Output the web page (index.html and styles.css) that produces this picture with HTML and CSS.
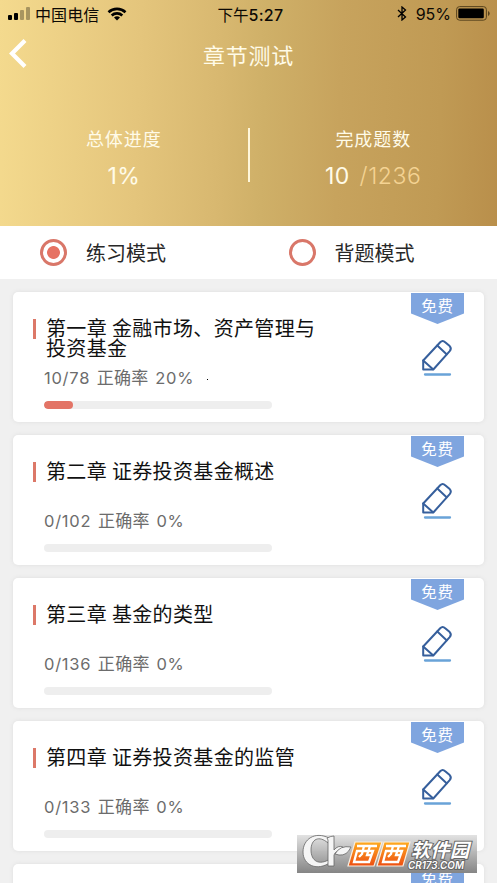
FILE: index.html
```html
<!DOCTYPE html>
<html lang="zh-CN">
<head>
<meta charset="utf-8">
<title>章节测试</title>
<link rel="stylesheet" href="styles.css">
</head>
<body>
<svg class="defs" width="0" height="0" aria-hidden="true">
  <symbol id="pencil" viewBox="0 0 34 38">
    <g fill="none" stroke="#365f9c" stroke-width="2" stroke-linejoin="round" stroke-linecap="round">
      <path d="M3.200 22.500 20.200 4.200q2.400-2.500 5 0l4.500 3.900q2.200 2.400 0 5L13.300 31.500H3.200z"/>
      <path d="m17.300 7.500 9.300 8.700M3.200 22.500l9.800 8.700"/>
    </g>
    <path d="M5 36.500h25" stroke="#69a3d8" stroke-width="2.300" stroke-linecap="round"/>
  </symbol>
</svg>
<div class="screen">
  <header class="hero">
    <div class="status">
      <div class="carrier">
        <svg width="23" height="14" viewBox="0 0 23 14"><rect x="0" y="8" width="4" height="5" rx="1"/><rect x="6" y="6" width="4" height="7" rx="1"/><g opacity=".3"><rect x="12" y="3" width="4" height="10" rx="1"/><rect x="18" y="0" width="4" height="13" rx="1"/></g></svg>
        <span class="operator">中国电信</span>
        <svg class="wifi" width="20" height="14" viewBox="0 0 20 14"><path d="M1.500 5.200a12.400 12.400 0 0 1 17 0M4.700 8.500a7.700 7.700 0 0 1 10.600 0" fill="none" stroke="#000" stroke-width="2.600"/><path d="m10 13.500 3-3.100q-3-2.200-6 0z"/></svg>
      </div>
      <div class="clock">下午<span>5:27</span></div>
      <div class="power">
        <svg width="10" height="15" viewBox="0 0 10 15"><path d="m1 4 7.500 7L5 14V1l3.500 3L1 11" fill="none" stroke="#000" stroke-width="1.300"/></svg>
        <span>95%</span>
        <svg class="battery" width="34" height="15" viewBox="0 0 34 15"><rect x=".6" y=".6" width="29.800" height="13.600" rx="3" fill="none" stroke="#58431d" stroke-width="1"/><rect x="2.300" y="2.500" width="25.500" height="9.800" rx="1.200"/><path d="M32 5v5q1.700-.6 1.700-2.500T32 5" fill="#58431d"/></svg>
      </div>
    </div>
    <div class="nav">
      <svg class="back" width="18" height="30" viewBox="0 0 18 30"><path d="M16 1.500 3 14.500 16 27.500" fill="none" stroke="#fff" stroke-width="4.200"/></svg>
      <h1>章节测试</h1>
    </div>
    <div class="stats">
      <div class="stat"><div class="label">总体进度</div><div class="value">1%</div></div>
      <div class="divider"></div>
      <div class="stat"><div class="label">完成题数</div><div class="value">10 <span>/1236</span></div></div>
    </div>
  </header>
  <nav class="modes">
    <div class="mode"><i class="radio on"></i>练习模式</div>
    <div class="mode"><i class="radio"></i>背题模式</div>
  </nav>
  <main class="list">
    <article class="card">
      <h2>第一章 金融市场、资产管理与<br>投资基金</h2>
      <p><b>10/78</b> 正确率 <b>20%</b></p>
      <div class="track"><div class="fill" style="width:12.8%"></div></div>
      <div class="badge">免费</div><svg class="edit"><use href="#pencil"/></svg>
      <i class="dot"></i>
    </article>
    <article class="card">
      <h2>第二章 证券投资基金概述</h2>
      <p><b>0/102</b> 正确率 <b>0%</b></p>
      <div class="track"></div>
      <div class="badge">免费</div><svg class="edit"><use href="#pencil"/></svg>
    </article>
    <article class="card">
      <h2>第三章 基金的类型</h2>
      <p><b>0/136</b> 正确率 <b>0%</b></p>
      <div class="track"></div>
      <div class="badge">免费</div><svg class="edit"><use href="#pencil"/></svg>
    </article>
    <article class="card">
      <h2>第四章 证券投资基金的监管</h2>
      <p><b>0/133</b> 正确率 <b>0%</b></p>
      <div class="track"></div>
      <div class="badge">免费</div><svg class="edit"><use href="#pencil"/></svg>
    </article>
    <article class="card"><div class="badge">免费</div></article>
  </main>
  <div class="watermark">
    <svg width="180" height="38" viewBox="0 0 180 38">
      <defs><linearGradient id="orange" x2="0" y2="1"><stop stop-color="#ffac20"/><stop offset="1" stop-color="#ed4e12"/></linearGradient></defs>
      <g stroke="#666" stroke-width=".8" fill="#f5f5f5">
        <path d="M32 3C18-4 6 4 6 17s14 20 28 10l-1-3C22 31 14 26 14 15S22 0 31 8z"/>
        <path d="M30 3q4-2 7-2v14q4-5 9-3l-2 4q-5-1-7 4v11h-6V5z"/>
        <path d="M38 19q5-9 16-7-4 9-12 8z"/>
      </g>
      <g stroke="#f8eee0" stroke-width="1.200" fill="url(#orange)"><path d="M58 7h27l-8 24H51zM87 7h26l-7 24H80z"/></g>
      <g fill="none" stroke="#fff" stroke-width="2.300">
        <path id="xi" d="M60 11h20M60 16h16l-4 11H57zM67 11l-2 8-3 3M73 11l-3 9h4"/>
        <use href="#xi" x="29"/>
      </g>
      <text class="brand" x="114" y="22" textLength="58">软件园</text>
      <text class="domain" x="111" y="34" textLength="56" lengthAdjust="spacingAndGlyphs">CR173.COM</text>
    </svg>
  </div>
</div>
</body>
</html>
```
FILE: styles.css
```css
* { box-sizing: border-box; }
body { margin: 0; }
.defs { position: absolute; }
.screen {
  position: relative;
  width: 497px;
  height: 883px;
  overflow: hidden;
  background: #f0f0f0;
  font-family: "Noto Sans CJK SC", sans-serif;
  font-weight: 400;
}
.hero {
  height: 226px;
  background: linear-gradient(92deg, #f4da8e 0%, #e4c57c 28%, #d8b870 44%, #cfb068 53%, #c7a35d 68%, #c09a54 88%, #b98f4b 100%);
  color: #fffbe8;
}
.status {
  display: grid;
  grid-template-columns: 1fr auto 1fr;
  align-items: center;
  height: 27px;
  padding: 0 7px 0 8px;
  color: #0c0904;
}
.carrier, .power { display: flex; align-items: center; }
.operator { margin-left: 4px; font-size: 16px; letter-spacing: .1px; line-height: 24px; }
.wifi { margin-left: 8px; }
.clock { padding-left: 3px; font-size: 15.500px; line-height: 24px; }
.clock span { font: 500 16px Inter, sans-serif; letter-spacing: .3px; }
.power { justify-content: flex-end; font: 400 16px Inter, sans-serif; }
.power span { margin-left: 9px; }
.battery { margin-left: 5px; }
.nav {
  display: grid;
  grid-template-columns: 60px 1fr 60px;
  align-items: center;
  height: 54px;
}
.back { margin-left: 9px; }
h1 { margin: 0; font-size: 22px; font-weight: 400; letter-spacing: .8px; text-align: center; line-height: 30px; }
.stats { display: flex; padding-top: 44px; }
.stat { flex: 1; text-align: center; }
.label { font-size: 18px; line-height: 26px; letter-spacing: .9px; }
.value { margin-top: 8px; font: 400 23px/34px Inter, sans-serif; }
.value span { color: #f4d393; font-weight: 300; letter-spacing: .6px; margin-left: 3px; }
.divider { width: 2px; height: 54px; margin-top: 3px; background: #fff7db; }
.stat .value { letter-spacing: .4px; }
.modes { display: flex; height: 53px; background: #fff; }
.mode { display: flex; align-items: center; width: 248.500px; padding-left: 40px; font-size: 20px; color: #282828; }
.radio { width: 27px; height: 27px; margin-right: 19px; border: 3px solid #d97769; border-radius: 50%; }
.radio.on { background: radial-gradient(circle, #e67263 6px, #fff 6.800px); }
.list { display: grid; gap: 13px; padding: 13px 13px 0; }
.card {
  position: relative;
  height: 130px;
  padding: 26px 0 0 31px;
  border-radius: 5px;
  background: #fff;
  box-shadow: 0 0 4px #dedede;
}
h2 {
  height: 46px;
  margin: 0 0 0 -11px;
  padding-left: 13px;
  font-size: 20px;
  font-weight: 400;
  line-height: 20px;
  letter-spacing: .35px;
  color: #111;
  background: linear-gradient(#dc7868, #dc7868) 0 1px / 3px 20px no-repeat;
}
p { margin: 0; font-size: 17px; line-height: 26px; color: #6c6c6c; white-space: nowrap; letter-spacing: .3px; word-spacing: 2.500px; }
p b { font: 400 16.500px Inter, sans-serif; letter-spacing: .75px; }
.track { width: 228px; height: 8px; margin-top: 11px; border-radius: 4px; background: #eee; overflow: hidden; }
.fill { height: 8px; border-radius: 4px; background: #e37466; }
.badge {
  position: absolute;
  top: 1px;
  left: 398px;
  width: 53px;
  height: 31px;
  background: #7fa5df;
  clip-path: polygon(0 0, 100% 0, 100% 66%, 50% 100%, 0 66%);
  color: #fff;
  font-size: 15.500px;
  line-height: 24px;
  letter-spacing: .7px;
  text-align: center;
}
.edit { position: absolute; left: 407px; top: 46px; width: 34px; height: 38px; }
.dot { position: absolute; left: 194px; top: 87px; width: 1px; height: 1px; background: #000; }
.watermark { position: absolute; left: 297px; top: 835px; width: 180px; height: 38px; background: linear-gradient(#dededee0, #858585); }
.watermark svg { display: block; overflow: visible; }
.brand, .domain { fill: #fff; stroke: #666; stroke-width: 2px; paint-order: stroke; }
.brand { font: italic 700 19px "Noto Sans CJK SC", sans-serif; }
.domain { font: italic 600 10px Inter, sans-serif; }
```
